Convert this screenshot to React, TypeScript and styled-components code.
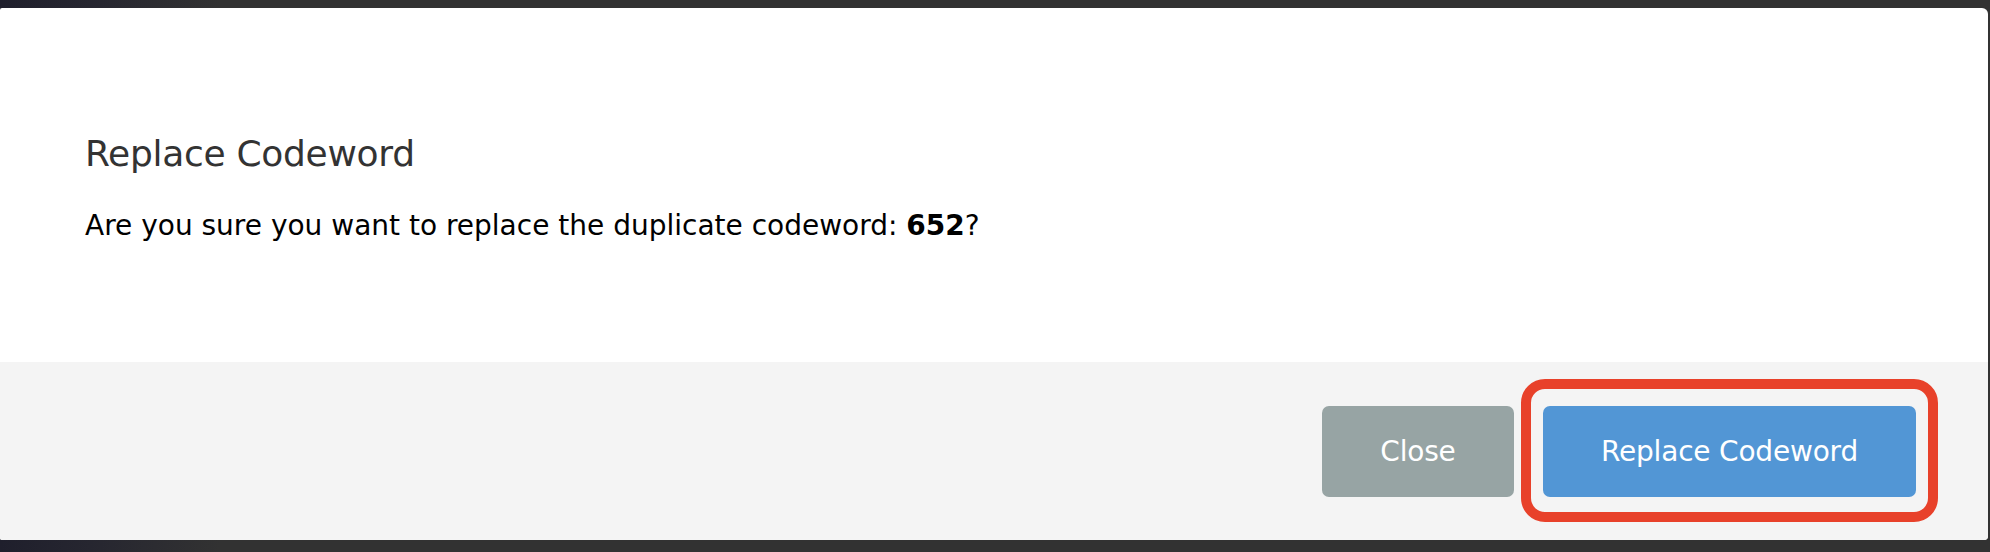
import React from "react";
import styled, { createGlobalStyle } from "styled-components";

const GlobalStyle = createGlobalStyle`
  html, body {
    margin: 0;
    padding: 0;
    height: 552px;
    overflow: hidden;
  }
  body {
    background: linear-gradient(to right, #1f1f2c 0px, #262630 90px, #323232 220px, #323232 100%);
    font-family: "DejaVu Sans", "Liberation Sans", sans-serif;
  }
`;

const Page = styled.div`
  height: 552px;
  box-sizing: border-box;
  padding: 8px 2px 12px 0;
  display: flex;
`;

const Modal = styled.div`
  flex: 1;
  display: flex;
  flex-direction: column;
  background: #ffffff;
  border-radius: 2px 6px 4px 2px;
  overflow: hidden;
`;

const Body = styled.div`
  height: 354px;
  box-sizing: border-box;
  padding: 126px 85px 0 85px;
  display: flex;
  flex-direction: column;
  gap: 32px;
`;

const Title = styled.h4`
  margin: 0;
  font-family: "DejaVu Sans", "Liberation Sans", sans-serif;
  font-weight: normal;
  font-size: 36px;
  line-height: 40px;
  letter-spacing: -0.3px;
  color: #333333;
`;

const Message = styled.p`
  margin: 0;
  font-size: 28px;
  line-height: 40px;
  color: #000000;
`;

const Footer = styled.div`
  flex: 1;
  background: #f4f4f4;
  display: flex;
  justify-content: flex-end;
  align-items: flex-start;
  gap: 29px;
  padding: 44px 72px 0 0;
`;

const Button = styled.button<{ $variant: "muted" | "primary" }>`
  position: relative;
  flex: none;
  box-sizing: border-box;
  height: 91px;
  width: ${(p) => (p.$variant === "primary" ? "373px" : "192px")};
  border: none;
  border-radius: 7px;
  padding: 0;
  background: ${(p) => (p.$variant === "primary" ? "#5296d5" : "#97a4a4")};
  color: #ffffff;
  font-family: "DejaVu Sans", "Liberation Sans", sans-serif;
  font-size: 28px;
  line-height: 34px;
  letter-spacing: -0.2px;
  white-space: nowrap;
  cursor: pointer;
`;

const Highlight = styled.span`
  position: absolute;
  left: -22px;
  right: -22px;
  top: -27px;
  bottom: -25px;
  border: 10px solid #e8412a;
  border-radius: 24px;
  pointer-events: none;
`;

export default function App() {
  return (
    <>
      <GlobalStyle />
      <Page>
        <Modal>
          <Body>
            <Title>Replace Codeword</Title>
            <Message>
              Are you sure you want to replace the duplicate codeword: <b>652</b>?
            </Message>
          </Body>
          <Footer>
            <Button $variant="muted">Close</Button>
            <Button $variant="primary">
              Replace Codeword
              <Highlight />
            </Button>
          </Footer>
        </Modal>
      </Page>
    </>
  );
}
